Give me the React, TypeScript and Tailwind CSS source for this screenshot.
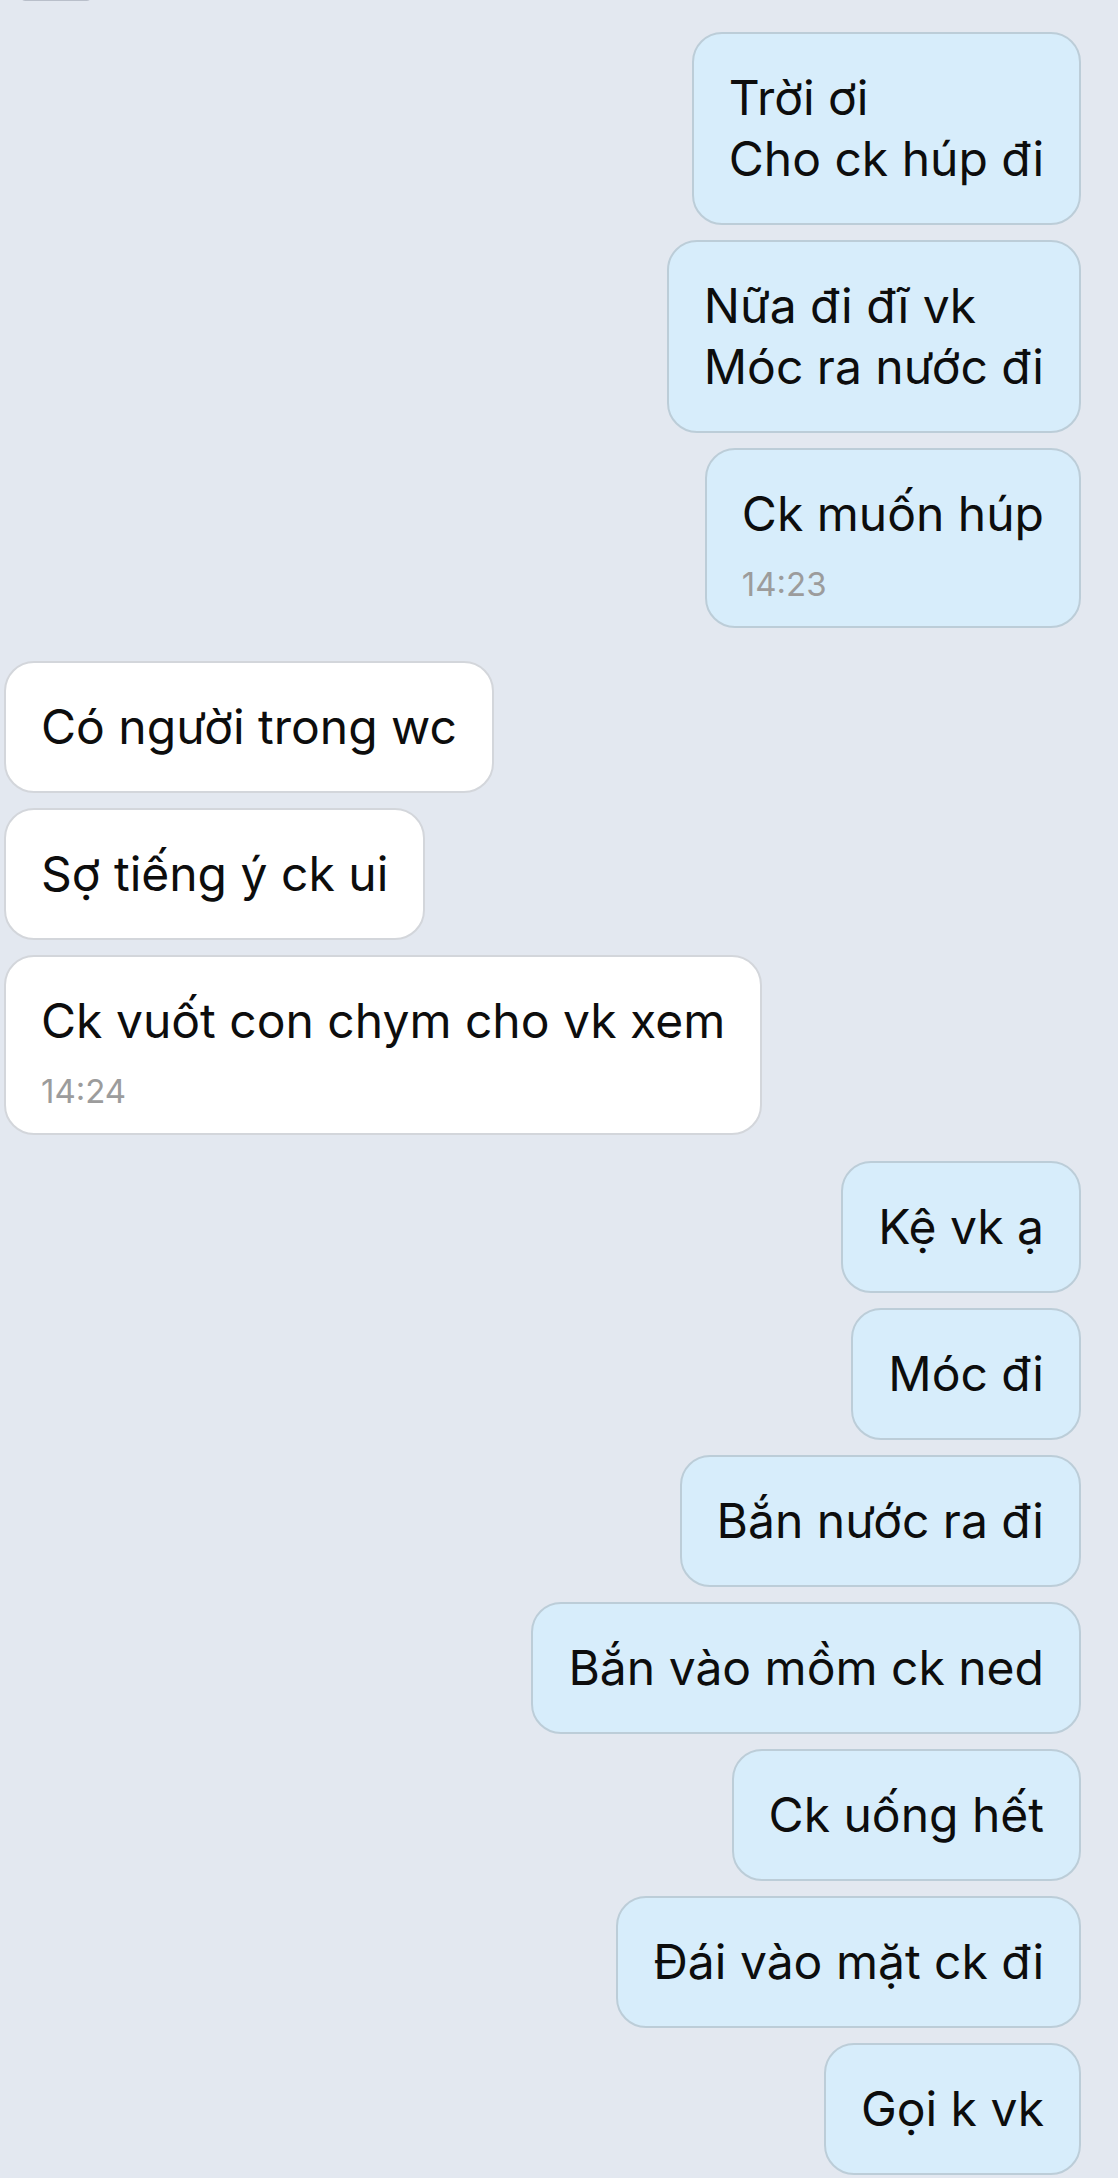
type Msg = { side: "in" | "out"; lines: string[]; time?: string; extraTop?: string };

const messages: Msg[] = [
  { side: "out", lines: ["Trời ơi", "Cho ck húp đi"] },
  { side: "out", lines: ["Nữa đi đĩ vk", "Móc ra nước đi"] },
  { side: "out", lines: ["Ck muốn húp"], time: "14:23" },
  { side: "in", lines: ["Có người trong wc"], extraTop: "mt-[18px]" },
  { side: "in", lines: ["Sợ tiếng ý ck ui"] },
  { side: "in", lines: ["Ck vuốt con chym cho vk xem"], time: "14:24" },
  { side: "out", lines: ["Kệ vk ạ"], extraTop: "mt-[11px]" },
  { side: "out", lines: ["Móc đi"] },
  { side: "out", lines: ["Bắn nước ra đi"] },
  { side: "out", lines: ["Bắn vào mồm ck ned"] },
  { side: "out", lines: ["Ck uống hết"] },
  { side: "out", lines: ["Đái vào mặt ck đi"] },
  { side: "out", lines: ["Gọi k vk"] },
];

function Bubble({ msg }: { msg: Msg }) {
  const isOut = msg.side === "out";
  return (
    <div
      className={`${isOut ? "self-end mr-[37px] bg-[#d7edfb] border-[#bccdd8]" : "self-start ml-[4px] bg-white border-[#d3d6db]"} ${
        msg.extraTop ?? ""
      } rounded-[30px] border-2 px-[35px] pt-[33px] pb-[34px]`}
    >
      {msg.lines.map((line, i) => (
        <div key={i} className="text-[48px] leading-[61px] text-[#0d0d0d] whitespace-nowrap">
          {line}
        </div>
      ))}
      {msg.time && (
        <div className="text-[33px] leading-[40px] mt-[20px] mb-[-12px] text-[#9c9c9c]">{msg.time}</div>
      )}
    </div>
  );
}

export default function App() {
  return (
    <div
      className="relative w-[1118px] h-[2178px] overflow-hidden bg-[#e3e8f0]"
      style={{ fontFamily: "Inter, 'Noto Sans', sans-serif" }}
    >
      {/* partially scrolled-off element at the top */}
      <div className="absolute left-[20px] top-[-10px] w-[72px] h-[11px] rounded-full bg-[#b9bfca]" />

      <div className="flex flex-col gap-[15px] pt-[32px]">
        {messages.map((m, i) => (
          <Bubble key={i} msg={m} />
        ))}
      </div>
    </div>
  );
}
